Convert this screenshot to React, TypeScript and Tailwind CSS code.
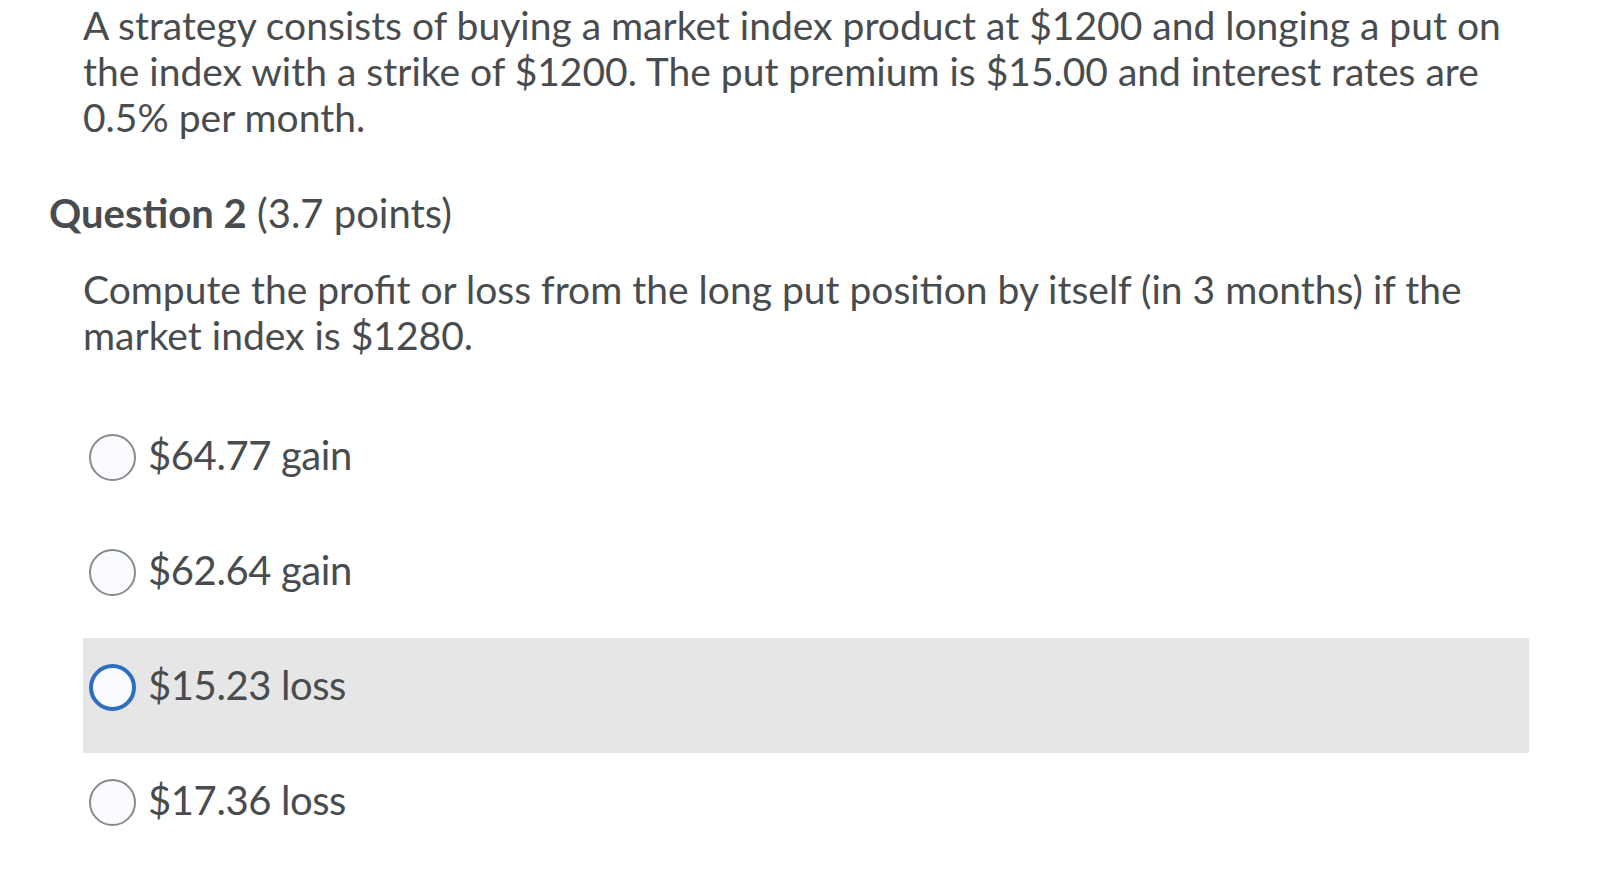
const options = [
  { label: "$64.77 gain", focused: false },
  { label: "$62.64 gain", focused: false },
  { label: "$15.23 loss", focused: true },
  { label: "$17.36 loss", focused: false },
];

export default function App() {
  return (
    <div className="min-h-[872px] bg-white pl-[49px] pr-[77px] font-['Lato',sans-serif] text-[#494c4e]">
      <p className="pl-[34px] pt-[2px] text-[39px] leading-[46px]">
        A strategy consists of buying a market index product at $1200 and longing a put on the index with a strike of
        $1200. The put premium is $15.00 and interest rates are 0.5% per month.
      </p>

      <h2 className="mt-[50px] text-[40px] leading-[46px]">
        <span className="font-bold">Question 2</span> (3.7 points)
      </h2>

      <p className="mt-[30px] pl-[34px] text-[39px] leading-[46px]">
        Compute the profit or loss from the long put position by itself (in 3 months) if the market index is $1280.
      </p>

      <div className="mt-[50px] ml-[34px] flex flex-col">
        {options.map((o) => (
          <label
            key={o.label}
            className={`flex h-[115px] items-start pt-[22px] pl-[6px] ${o.focused ? "bg-[#e6e6e6]" : ""}`}
          >
            <span
              className={`mt-[4px] h-[47px] w-[47px] shrink-0 rounded-full bg-[#f9fbff] ${
                o.focused ? "border-[4px] border-[#2d6ebf]" : "border-2 border-[#878b8e]"
              }`}
            />
            <span className="ml-[12px] text-[40px] leading-[50px] tracking-[-0.4px]">{o.label}</span>
          </label>
        ))}
      </div>
    </div>
  );
}
